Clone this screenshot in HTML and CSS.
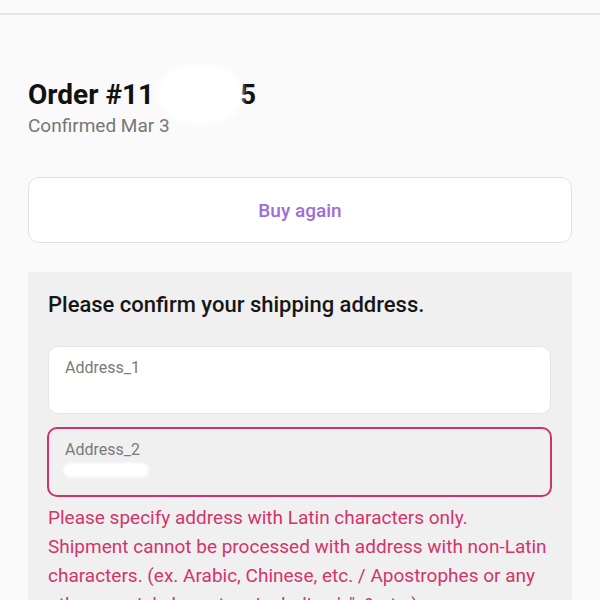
FILE: index.html
```html
<!DOCTYPE html>
<html lang="en">
<head>
<meta charset="utf-8">
<title>Order</title>
<link rel="stylesheet" href="styles.css">
</head>
<body>
<header class="topbar"></header>
<main class="page">
  <h1 class="order-title">Order #11<span class="redacted"></span>5</h1>
  <p class="order-date">Confirmed Mar 3</p>
  <button class="buy-again" type="button">Buy again</button>
  <section class="address-panel">
    <h2 class="panel-title">Please confirm your shipping address.</h2>
    <div class="field">
      <div class="field-label">Address_1</div>
      <div class="field-value"></div>
    </div>
    <div class="field field-error">
      <div class="field-label">Address_2</div>
      <div class="field-value"><span class="value-blob"></span></div>
    </div>
    <p class="error-text">Please specify address with Latin characters only.<br>Shipment cannot be processed with address with non-Latin characters. (ex. Arabic, Chinese, etc. / Apostrophes or any other special characters including ', ", &amp; etc.)</p>
  </section>
</main>
</body>
</html>
```

FILE: styles.css
```css
html, body {
  margin: 0;
  padding: 0;
  background: #fafafa;
  font-family: Roboto, "Liberation Sans", Arial, sans-serif;
  overflow: hidden;
  height: 600px;
}

.topbar {
  height: 13px;
  background: #fafafa;
  border-bottom: 2px solid #e3e3e3;
}

.page {
  padding: 0 28px;
}

.order-title {
  margin: 63px 0 0;
  font-size: 28px;
  line-height: 34px;
  font-weight: 700;
  color: #111;
}

.redacted {
  display: inline-block;
  width: 86px;
  height: 20px;
  position: relative;
}

.redacted::after {
  content: "";
  position: absolute;
  left: 4px;
  top: -20px;
  width: 84px;
  height: 60px;
  background: #fff;
  border-radius: 45%;
  filter: blur(3px);
}

.order-date {
  margin: 2px 0 0;
  font-size: 19px;
  line-height: 24px;
  color: #777;
}

.buy-again {
  display: block;
  width: 100%;
  height: 66px;
  margin-top: 39px;
  background: #fff;
  border: 1px solid #e2e2e2;
  border-radius: 11px;
  font-family: inherit;
  font-size: 19px;
  font-weight: 500;
  color: #9d6ddc;
  padding: 0;
}

.address-panel {
  margin-top: 29px;
  background: #f0f0f0;
  padding: 21px 21px 40px 20px;
}

.panel-title {
  margin: 0;
  font-size: 22px;
  line-height: 24px;
  font-weight: 500;
  color: #161616;
}

.field {
  margin-top: 29px;
  background: #fff;
  border: 1px solid #e6e6e6;
  border-radius: 10px;
  padding: 11px 16px 15px;
}

.field-error {
  margin-top: 13px;
  margin-left: -1px;
  margin-right: -1px;
  background: #f0f0f0;
  border: 2px solid #cf326a;
}

.field-label {
  font-size: 16px;
  line-height: 20px;
  color: #7a7a7a;
}

.field-value {
  height: 20px;
  position: relative;
}

.value-blob {
  position: absolute;
  left: -2px;
  top: 3px;
  width: 86px;
  height: 14px;
  background: #fff;
  border-radius: 8px;
  filter: blur(1.5px);
}

.error-text {
  margin: 6px 0 0;
  font-size: 19px;
  line-height: 29px;
  color: #d2356b;
}
```
